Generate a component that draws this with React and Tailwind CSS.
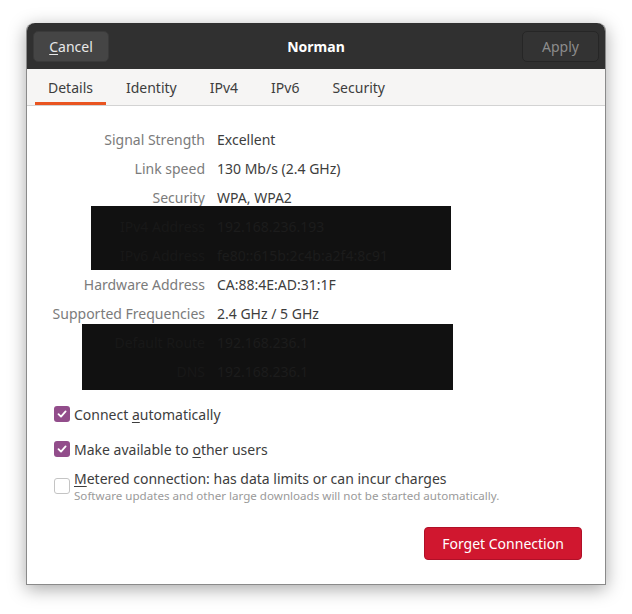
import React from "react";

const rows = [
  ["Signal Strength", "Excellent"],
  ["Link speed", "130 Mb/s (2.4 GHz)"],
  ["Security", "WPA, WPA2"],
];
const rows2 = [
  ["Hardware Address", "CA:88:4E:AD:31:1F"],
  ["Supported Frequencies", "2.4 GHz / 5 GHz"],
];

function Row({ label, value, dark }) {
  return (
    <div className="flex h-[29px] items-center">
      <div className={`w-[177px] shrink-0 text-right pr-[12px] ${dark ? "text-[#181818]" : "text-[#7b7b7b]"}`}>{label}</div>
      <div className={dark ? "text-[#1c1c1c]" : "text-[#3d3d3d]"}>{value}</div>
    </div>
  );
}

function Check({ checked }) {
  return checked ? (
    <div className="w-[16px] h-[16px] rounded-[3px] bg-[#924d8b] flex items-center justify-center shrink-0">
      <svg width="12" height="12" viewBox="0 0 12 12">
        <path d="M2.5 6.2 L5 8.6 L9.6 3.4" stroke="white" strokeWidth="1.8" fill="none" strokeLinecap="round" strokeLinejoin="round" />
      </svg>
    </div>
  ) : (
    <div className="w-[16px] h-[16px] rounded-[3px] border border-[#c4c4c4] bg-white shrink-0" />
  );
}

export default function App() {
  const font = { fontFamily: '"Noto Sans", "DejaVu Sans", sans-serif' };
  return (
    <div className="w-[632px] h-[614px] bg-white pt-[23px] pl-[26px]" style={font}>
      <div className="w-[580px] h-[562px] rounded-t-[8px] bg-white border border-[#8a8a8a] border-t-0 shadow-[0_4px_18px_rgba(0,0,0,0.35)] flex flex-col text-[14px]">
        <div className="h-[46px] bg-[#303030] rounded-t-[8px] flex items-center justify-between px-[6px] relative">
          <div className="w-[76px] h-[31px] rounded-[5px] bg-[#454545] border border-[#3a3a3a] flex items-center justify-center text-[#e8e8e8] text-[14px]">
            <span><span className="underline underline-offset-2">C</span>ancel</span>
          </div>
          <div className="absolute left-0 right-0 text-center text-white font-bold text-[14px] pointer-events-none">Norman</div>
          <div className="w-[77px] h-[31px] rounded-[5px] bg-[#333333] border border-[#262626] flex items-center justify-center text-[#8c8c8c] text-[14px]">
            Apply
          </div>
        </div>
        <div className="h-[37px] bg-[#f6f5f4] border-b border-[#d3d3d3] flex pl-[8px] gap-[7px] text-[#3d3d3d]">
          {["Details", "Identity", "IPv4", "IPv6", "Security"].map((t, i) => (
            <div key={t} className={`px-[13px] flex items-center relative ${i === 0 ? "border-b-[3px] border-[#e95420] pt-[3px]" : ""}`}>
              {t}
            </div>
          ))}
        </div>
        <div className="flex flex-col pt-[19px]">
          <div className="pl-[13px]">
            {rows.map(([l, v]) => <Row key={l} label={l} value={v} />)}
          </div>
          <div className="ml-[64px] w-[360px] bg-[#111111] -mt-[6px] pt-[6px]">
            <div className="-ml-[51px]">
              <Row label="IPv4 Address" value="192.168.236.193" dark />
              <Row label="IPv6 Address" value="fe80::615b:2c4b:a2f4:8c91" dark />
            </div>
          </div>
          <div className="pl-[13px]">
            {rows2.map(([l, v]) => <Row key={l} label={l} value={v} />)}
          </div>
          <div className="ml-[55px] w-[371px] bg-[#111111] -mt-[4px] pt-[4px] pb-[4px]">
            <div className="-ml-[42px]">
              <Row label="Default Route" value="192.168.236.1" dark />
              <Row label="DNS" value="192.168.236.1" dark />
            </div>
          </div>
          <div className="pl-[27px] mt-[12px] flex flex-col text-[#3d3d3d]">
            <div className="flex items-center gap-[4px] h-[24px]">
              <Check checked />
              <span>Connect <span className="underline underline-offset-2">a</span>utomatically</span>
            </div>
            <div className="flex items-center gap-[4px] h-[24px] mt-[11px]">
              <Check checked />
              <span>Make available to <span className="underline underline-offset-2">o</span>ther users</span>
            </div>
            <div className="flex items-center gap-[4px] mt-[8px]">
              <Check />
              <div className="flex flex-col">
                <span className="leading-[19px]"><span className="underline underline-offset-2">M</span>etered connection: has data limits or can incur charges</span>
                <span className="text-[11.6px] text-[#9a9a9a] leading-[15px]">Software updates and other large downloads will not be started automatically.</span>
              </div>
            </div>
          </div>
          <div className="flex justify-end pr-[23px] mt-[24px]">
            <div className="w-[158px] h-[33px] rounded-[4px] bg-[#d0172f] border border-[#b01028] text-white flex items-center justify-center text-[14px]">
              Forget Connection
            </div>
          </div>
        </div>
      </div>
    </div>
  );
}
